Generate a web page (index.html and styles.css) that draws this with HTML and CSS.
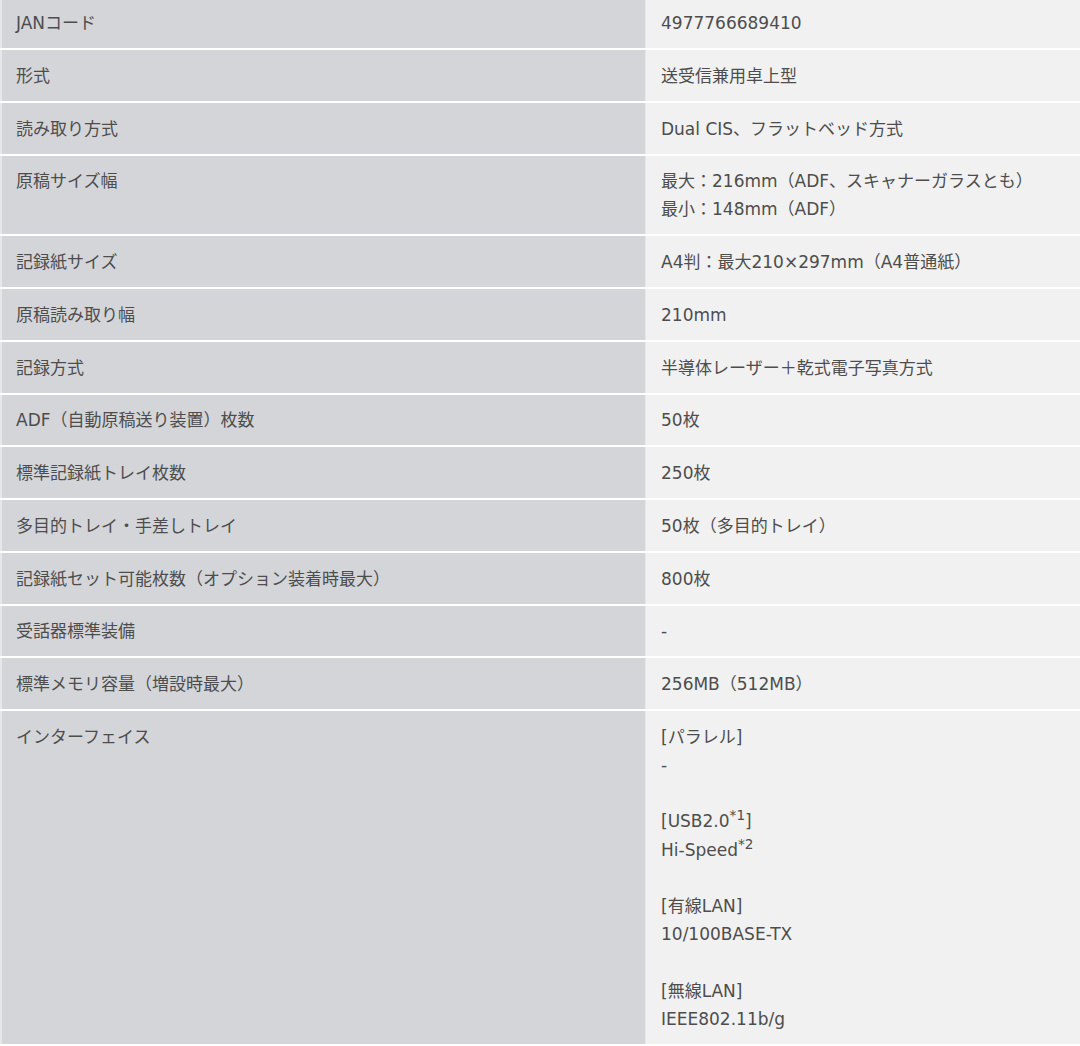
FILE: index.html
```html
<!DOCTYPE html>
<html lang="ja">
<head>
    <meta charset="UTF-8">
    <meta name="viewport" content="width=device-width, initial-scale=1.0">
    <title>仕様</title>
    <link rel="stylesheet" href="styles.css">
</head>
<body>
    <table class="spec-table">
        <colgroup>
            <col class="col-label">
            <col>
        </colgroup>
        <tr><th>JANコード</th><td>4977766689410</td></tr>
        <tr><th>形式</th><td>送受信兼用卓上型</td></tr>
        <tr><th>読み取り方式</th><td>Dual CIS、フラットベッド方式</td></tr>
        <tr><th>原稿サイズ幅</th><td>最大：216mm（ADF、スキャナーガラスとも）<br>最小：148mm（ADF）</td></tr>
        <tr><th>記録紙サイズ</th><td>A4判：最大210×297mm（A4普通紙）</td></tr>
        <tr><th>原稿読み取り幅</th><td>210mm</td></tr>
        <tr><th>記録方式</th><td>半導体レーザー＋乾式電子写真方式</td></tr>
        <tr><th>ADF（自動原稿送り装置）枚数</th><td>50枚</td></tr>
        <tr><th>標準記録紙トレイ枚数</th><td>250枚</td></tr>
        <tr><th>多目的トレイ・手差しトレイ</th><td>50枚（多目的トレイ）</td></tr>
        <tr><th>記録紙セット可能枚数（オプション装着時最大）</th><td>800枚</td></tr>
        <tr><th>受話器標準装備</th><td>-</td></tr>
        <tr><th>標準メモリ容量（増設時最大）</th><td>256MB（512MB）</td></tr>
        <tr class="row-long">
            <th>インターフェイス</th>
            <td>[パラレル]<br>-<br><br>[USB2.0<sup>*1</sup>]<br>Hi-Speed<sup>*2</sup><br><br>[有線LAN]<br>10/100BASE-TX<br><br>[無線LAN]<br>IEEE802.11b/g</td>
        </tr>
        <tr><th>&nbsp;</th><td>&nbsp;</td></tr>
    </table>
</body>
</html>
```

FILE: styles.css
```css
body {
    margin: 0;
    background-color: #ffffff;
    font-family: 'DejaVu Sans', 'Noto Sans CJK JP', sans-serif;
    color: #4d4d4d;
    overflow: hidden;
}

.spec-table {
    width: 100%;
    table-layout: fixed;
    border-collapse: collapse;
    margin-top: -2.75px;
    font-size: 17px;
    line-height: 28px;
}

.col-label {
    width: 645px;
}

.spec-table th,
.spec-table td {
    padding: 11.75px 16px 11px;
    text-align: left;
    vertical-align: top;
    font-weight: normal;
    border-bottom: 2px solid #ffffff;
}

.spec-table th {
    background-color: #d4d5d9;
    box-shadow: inset 2px 0 0 #e6e7e9;
}

.spec-table td {
    background-color: #f1f1f1;
    box-shadow: inset 1px 0 0 #e8e8ea;
}

.row-long td {
    line-height: 28.2px;
}

.spec-table sup {
    font-size: 0.8em;
    line-height: 0;
    vertical-align: 0.5em;
}
```
